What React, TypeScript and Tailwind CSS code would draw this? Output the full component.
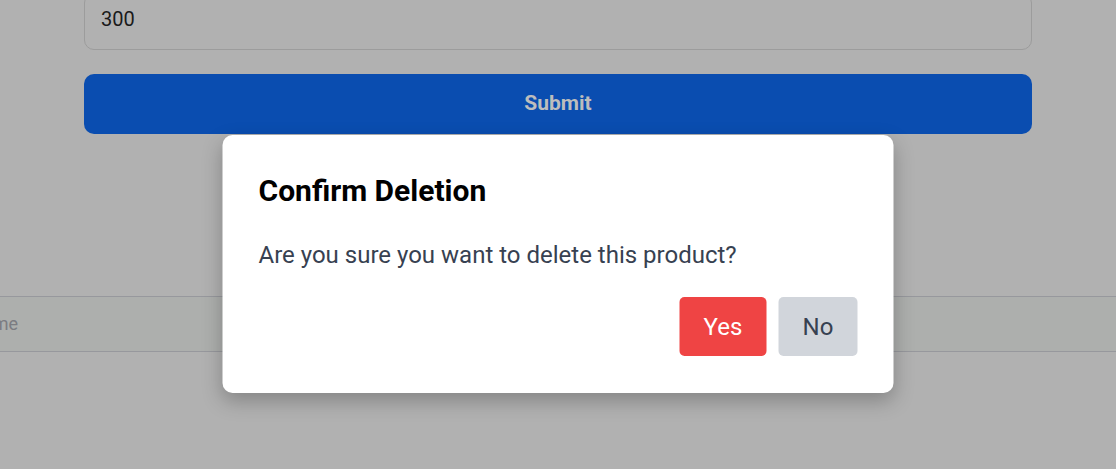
export default function App() {
  return (
    <div className="relative h-[469px] w-full overflow-hidden bg-[#b1b1b1] font-['Roboto',sans-serif]">
      {/* page behind the overlay */}
      <div className="mx-[84px] mt-[-7px] flex flex-col">
        <div className="flex h-[57px] items-end rounded-[10px] border border-[#9c9c9c] px-4 pb-[16px] text-xl text-[#1a1a1a]">
          300
        </div>
        <button className="mt-6 h-[60px] rounded-[10px] bg-[#0a4db0] text-[21px] font-bold text-[#bdbdbd]">
          Submit
        </button>
      </div>
      <div className="mt-[162px] flex h-[56px] items-center border-y border-[#97989d] bg-[#adafad]">
        <span className="ml-[-30px] text-lg text-[#7b7c82]">Name</span>
      </div>

      {/* confirm dialog */}
      <div className="absolute top-[135px] left-1/2 w-[671px] -translate-x-1/2 rounded-[10px] bg-white px-9 pt-[38px] pb-[37px] shadow-[0_8px_20px_rgba(0,0,0,0.25)]">
        <h2 className="text-3xl font-bold text-black">Confirm Deletion</h2>
        <p className="mt-[30px] text-2xl text-[#374151]">Are you sure you want to delete this product?</p>
        <div className="mt-[26px] flex justify-end gap-3">
          <button className="h-[59px] w-[87px] rounded-[5px] bg-[#ef4444] text-2xl text-white">Yes</button>
          <button className="h-[59px] w-[79px] rounded-[5px] bg-[#d1d5db] text-2xl text-[#374151]">No</button>
        </div>
      </div>
    </div>
  );
}
